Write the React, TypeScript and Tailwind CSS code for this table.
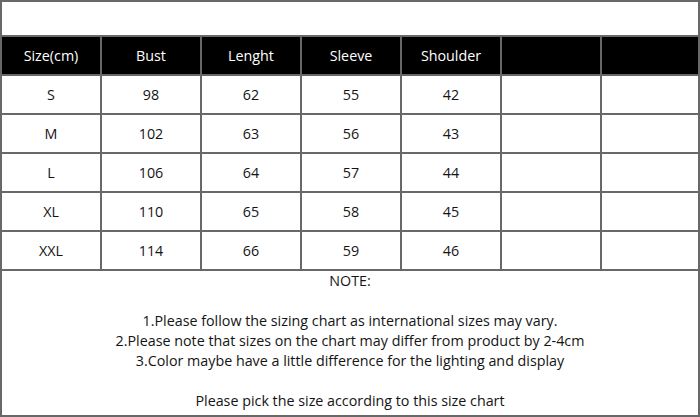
import React from "react";

const headers = ["Size(cm)", "Bust", "Lenght", "Sleeve", "Shoulder", "", ""];
const rows = [
  ["S", "98", "62", "55", "42", "", ""],
  ["M", "102", "63", "56", "43", "", ""],
  ["L", "106", "64", "57", "44", "", ""],
  ["XL", "110", "65", "58", "45", "", ""],
  ["XXL", "114", "66", "59", "46", "", ""],
];

function Row({ cells, header }: { cells: string[]; header?: boolean }) {
  return (
    <div className={`flex h-[39px] border-t-2 border-[#686868] ${header ? "bg-black text-white" : "bg-white text-[#141414]"}`}>
      {cells.map((c, i) => (
        <div
          key={i}
          className={`flex items-center justify-center pt-[1px] ${i === 0 ? "w-[98px]" : i === 6 ? "flex-1 border-l-2 border-[#686868]" : "w-[100px] border-l-2 border-[#686868]"}`}
        >
          {c}
        </div>
      ))}
    </div>
  );
}

export default function App() {
  return (
    <div
      className="w-[700px] h-[417px] border-2 border-[#686868] bg-white flex flex-col text-[14.3px] leading-[20px]"
      style={{ fontFamily: '"Open Sans", "Noto Sans", sans-serif' }}
    >
      <div className="h-[33px]" />
      <Row cells={headers} header />
      {rows.map((r, i) => (
        <Row key={i} cells={r} />
      ))}
      <div className="flex-1 border-t-2 border-[#686868] flex flex-col items-center text-[#141414]">
        <div>NOTE:</div>
        <div className="h-[20px]" />
        <div>1.Please follow the sizing chart as international sizes may vary.</div>
        <div>2.Please note that sizes on the chart may differ from product by 2-4cm</div>
        <div>3.Color maybe have a little difference for the lighting and display</div>
        <div className="h-[20px]" />
        <div>Please pick the size according to this size chart</div>
      </div>
    </div>
  );
}
